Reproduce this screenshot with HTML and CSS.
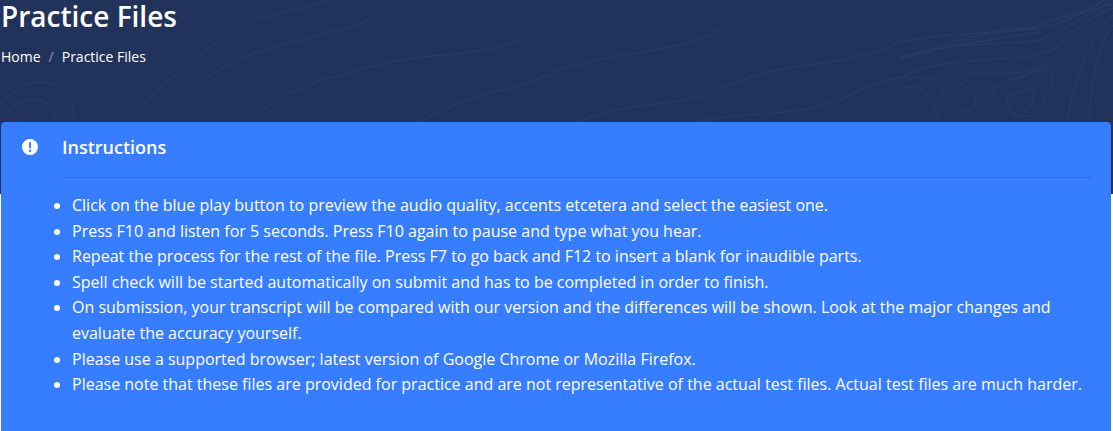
FILE: index.html
```html
<!DOCTYPE html>
<html>

<head>
	<title>Practice Files</title>
	<link rel="stylesheet" href="styles.css">
</head>

<body>
	<header class="hero">
		<svg class="contours" viewBox="0 0 1113 194" preserveAspectRatio="none" fill="none">
			<path d="M900 42C960 30 1010 35 1030 28C1060 18 1090 8 1113 5" />
			<path d="M900 60C940 45 1000 28 1015 28C1050 32 1070 20 1113 -5" />
			<path d="M900 58C930 48 990 40 1040 32" />
			<path d="M900 58C960 40 1000 46 1040 40C1070 30 1090 10 1113 2" />
			<path d="M900 78C950 50 1030 68 1060 45C1080 25 1100 12 1113 8" />
			<path d="M960 74C1000 72 1040 80 1060 50" />
			<path d="M950 72C955 85 980 90 975 105C965 118 945 108 942 92C941 80 930 76 900 78" />
			<path d="M900 90C920 80 930 95 940 122" />
			<path d="M993 88C1010 80 1040 70 1050 66C1058 75 1050 90 1035 115C1020 120 1000 110 993 88" />
			<path d="M1007 96C1020 92 1030 88 1034 87C1036 100 1025 115 1017 117C1010 112 1005 105 1007 96Z" />
			<path d="M1066 122C1075 90 1080 50 1113 15" />
			<path d="M1090 122C1090 90 1095 50 1113 25" />
			<path d="M0 105C30 70 70 75 75 120C60 150 20 150 0 130" />
			<path d="M10 110C30 90 55 100 55 120C45 135 20 130 10 110Z" />
			<path d="M130 122C160 80 200 60 230 30C260 15 300 10 330 0" />
			<path d="M160 122C190 90 210 70 250 55C290 40 330 35 370 20" />
			<path d="M250 122C280 90 320 80 360 70C420 50 470 60 520 40" />
			<path d="M420 122C460 95 520 90 560 70C620 50 670 55 720 30" />
			<path d="M580 122C620 100 680 110 730 85C780 60 840 70 900 42" />
			<path d="M700 122C740 110 800 120 850 95C880 80 890 80 900 78" />
		</svg>
		<div class="hero-text">
			<h1 class="page-title">Practice Files</h1>
			<nav class="breadcrumb">
				<a class="crumb" href="#">Home</a>
				<span class="crumb-sep">/</span>
				<span class="crumb">Practice Files</span>
			</nav>
		</div>
	</header>

	<section class="card">
		<div class="card-head">
			<svg class="card-icon" viewBox="0 0 16 16">
				<path fill="#fff" fill-rule="evenodd" d="M8 0a8 8 0 1 1 0 16A8 8 0 0 1 8 0ZM6.9 3.2l.3 6.2h1.6l.3-6.2ZM8 10.4a1.3 1.3 0 1 0 0 2.6 1.3 1.3 0 0 0 0-2.6Z" />
			</svg>
			<h2 class="card-title">Instructions</h2>
		</div>
		<ul class="card-list">
			<li>Click on the blue play button to preview the audio quality, accents etcetera and select the easiest one.</li>
			<li>Press F10 and listen for 5 seconds. Press F10 again to pause and type what you hear.</li>
			<li>Repeat the process for the rest of the file. Press F7 to go back and F12 to insert a blank for inaudible parts.</li>
			<li>Spell check will be started automatically on submit and has to be completed in order to finish.</li>
			<li>On submission, your transcript will be compared with our version and the differences will be shown. Look at the major changes and evaluate the accuracy yourself.</li>
			<li>Please use a supported browser; latest version of Google Chrome or Mozilla Firefox.</li>
			<li>Please note that these files are provided for practice and are not representative of the actual test files. Actual test files are much harder.</li>
		</ul>
	</section>
</body>

</html>
```

FILE: styles.css
```css
body,
* {
	margin: 0;
	padding: 0;
	box-sizing: border-box;
}

body {
	background: white;
	font-family: "Open Sans", sans-serif;
	color: white;
	overflow: hidden;
}

.hero {
	position: relative;
	height: 194px;
	background: #22335b;
	overflow: hidden;
}

.contours {
	position: absolute;
	top: 0;
	left: 0;
	width: 100%;
	height: 100%;
}

.contours path {
	stroke: #2a3c66;
	stroke-width: 1;
}

.hero-text {
	position: relative;
	padding-left: 1px;
}

.page-title {
	font-size: 28px;
	font-weight: 600;
	line-height: 32px;
}

.breadcrumb {
	display: flex;
	gap: 8px;
	margin-top: 15px;
	font-size: 14px;
	line-height: 20px;
}

.crumb {
	color: white;
	text-decoration: none;
}

.crumb-sep {
	color: #8d97ad;
}

.card {
	position: relative;
	margin: -72px 2px 0 1px;
	height: 309px;
	background: #377dff;
	border-radius: 4px 4px 0 0;
}

.card-head {
	display: flex;
	align-items: center;
	margin: 0 20px 0 61px;
	padding: 13px 0 18px;
	border-bottom: 1px solid #2c6cf0;
}

.card-icon {
	position: absolute;
	left: 21px;
	top: 17px;
	width: 16px;
	height: 16px;
}

.card-title {
	font-size: 18px;
	font-weight: 600;
	line-height: 24px;
}

.card-list {
	margin-top: 15px;
	padding-left: 71px;
	padding-right: 20px;
	font-size: 16px;
	line-height: 25.6px;
}
```
